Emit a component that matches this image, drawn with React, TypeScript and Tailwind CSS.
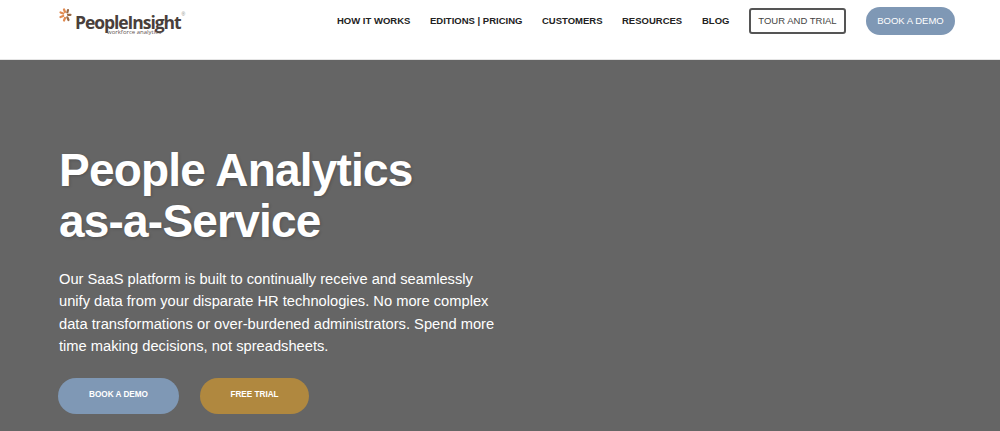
export default function App() {
  const links = [
    ["HOW IT WORKS", "w-[73px]"],
    ["EDITIONS | PRICING", "w-[92px]"],
    ["CUSTOMERS", "w-[60px]"],
    ["RESOURCES", "w-[60px]"],
    ["BLOG", "w-[27px]"],
  ];
  return (
    <div className="h-[431px] w-[1000px] overflow-hidden bg-[#656565] font-['Liberation_Sans',Arial,sans-serif]">
      <header className="flex h-[60px] items-start justify-between border-b border-[#e5e5e5] bg-white pl-[59px] pr-[45px]">
        <div className="mt-[8px] flex items-start">
          <svg width="13" height="14" viewBox="0 0 13 14" className="shrink-0">
            <g stroke="#e08a50" strokeWidth="2.2" strokeLinecap="round">
              <path d="M6 4 L5 1.5" />
              <path d="M4.2 5.5 L1.5 4.5" />
              <path d="M4.2 8 L1.5 9" />
              <path d="M6 10 L5 12.5" />
            </g>
            <g stroke="#9a6a45" strokeWidth="2.2" strokeLinecap="round">
              <path d="M9 2 L8.3 4.5" />
              <path d="M9 6.8 L11.5 6.8" />
              <path d="M8.3 9.3 L9.5 12" />
            </g>
          </svg>
          <div className="relative mt-[4px] ml-[3px] flex items-start text-[#4a3f3b]">
            <span className="font-['Open_Sans',sans-serif] text-[17.5px] font-bold leading-[20px] tracking-[-1.05px]">PeopleInsight</span>
            <span className="ml-[1px] text-[5px] leading-[5px] text-[#8a8a8a]">®</span>
            <span className="absolute top-[17px] left-[32px] font-['Open_Sans',sans-serif] text-[6px] leading-[7px] whitespace-nowrap text-[#5f5551]">workforce analytics</span>
          </div>
        </div>
        <nav className="flex items-start">
          {links.map(([label, width]) => (
            <a key={label} className={`mt-[15px] mr-[20px] whitespace-nowrap text-[9.5px] leading-[12px] font-bold text-[#222222] ${width}`}>
              {label}
            </a>
          ))}
          <a className="mt-[8px] flex h-[26px] w-[97px] items-center justify-center rounded-[3px] border-2 border-[#555555] text-[9.5px] text-[#444444]">
            TOUR AND TRIAL
          </a>
          <a className="mt-[7px] ml-[20px] flex h-[28px] w-[89px] items-center justify-center rounded-full bg-[#7f98b5] text-[9.5px] text-white">
            BOOK A DEMO
          </a>
        </nav>
      </header>
      <main className="pt-[85px] pl-[59px]">
        <h1 className="text-[46px] leading-[51px] font-bold tracking-[-0.8px] text-white [text-shadow:1px_1px_3px_rgba(0,0,0,0.2)]">
          People Analytics
          <br />
          as-a-Service
        </h1>
        <p className="mt-[21px] w-[450px] text-[14.7px] leading-[22.4px] text-white">
          Our SaaS platform is built to continually receive and seamlessly
          <br />
          unify data from your disparate HR technologies. No more complex
          <br />
          data transformations or over-burdened administrators. Spend more
          <br />
          time making decisions, not spreadsheets.
        </p>
        <div className="mt-[20px] ml-[-1px] flex gap-[21px]">
          <a className="flex h-[36px] w-[121px] items-center justify-center rounded-full bg-[#7f98b5] pb-[1px] text-[8.2px] font-bold text-white">
            BOOK A DEMO
          </a>
          <a className="flex h-[36px] w-[109px] items-center justify-center rounded-full bg-[#b0883f] pb-[1px] text-[8.2px] font-bold text-white">
            FREE TRIAL
          </a>
        </div>
      </main>
    </div>
  );
}
